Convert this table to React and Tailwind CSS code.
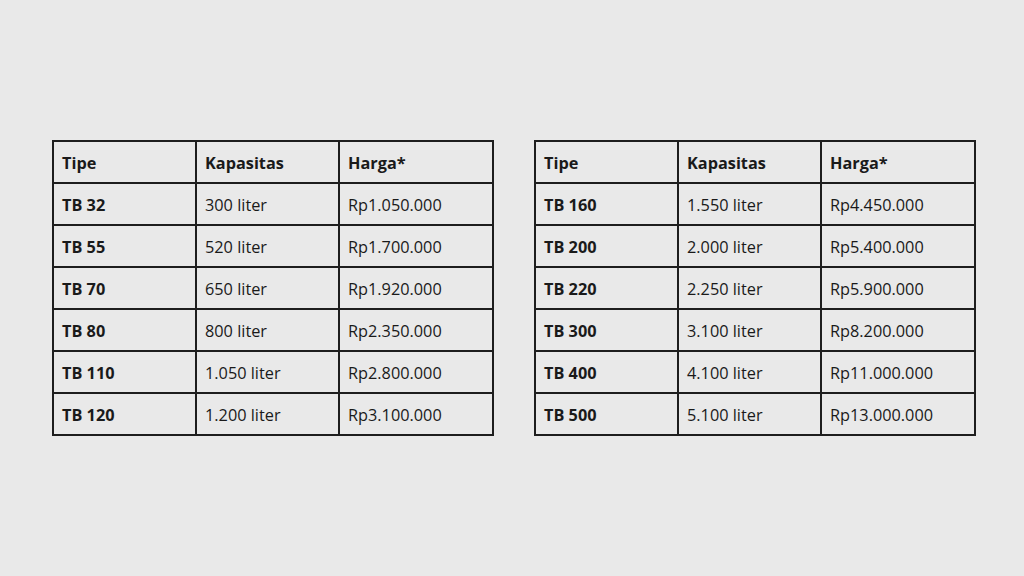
const left = [
  ['TB 32', '300 liter', 'Rp1.050.000'],
  ['TB 55', '520 liter', 'Rp1.700.000'],
  ['TB 70', '650 liter', 'Rp1.920.000'],
  ['TB 80', '800 liter', 'Rp2.350.000'],
  ['TB 110', '1.050 liter', 'Rp2.800.000'],
  ['TB 120', '1.200 liter', 'Rp3.100.000'],
]

const right = [
  ['TB 160', '1.550 liter', 'Rp4.450.000'],
  ['TB 200', '2.000 liter', 'Rp5.400.000'],
  ['TB 220', '2.250 liter', 'Rp5.900.000'],
  ['TB 300', '3.100 liter', 'Rp8.200.000'],
  ['TB 400', '4.100 liter', 'Rp11.000.000'],
  ['TB 500', '5.100 liter', 'Rp13.000.000'],
]

function PriceTable({ rows }) {
  const cell = 'border-2 border-[#1e1e1e] h-[42px] px-[8px] pt-[2px] text-left align-middle'
  return (
    <table className="table-fixed border-collapse w-[440px] text-[16.3px] text-[#1a1a1a]">
      <colgroup>
        <col className="w-[143px]" />
        <col className="w-[143px]" />
        <col className="w-[154px]" />
      </colgroup>
      <thead>
        <tr>
          <th className={`${cell} font-bold`}>Tipe</th>
          <th className={`${cell} font-bold`}>Kapasitas</th>
          <th className={`${cell} font-bold`}>Harga*</th>
        </tr>
      </thead>
      <tbody>
        {rows.map((r) => (
          <tr key={r[0]}>
            <td className={`${cell} font-bold`}>{r[0]}</td>
            <td className={cell}>{r[1]}</td>
            <td className={cell}>{r[2]}</td>
          </tr>
        ))}
      </tbody>
    </table>
  )
}

export default function App() {
  return (
    <div
      className="w-[1024px] h-[576px] bg-[#e9e9e9] flex items-center justify-start pl-[52px] gap-[40px]"
      style={{ fontFamily: '"Open Sans", sans-serif' }}
    >
      <PriceTable rows={left} />
      <PriceTable rows={right} />
    </div>
  )
}
